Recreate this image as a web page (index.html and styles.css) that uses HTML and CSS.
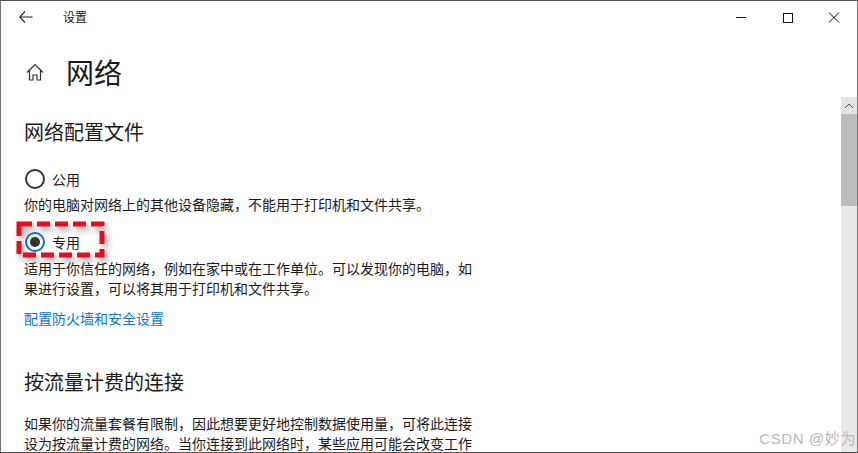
FILE: index.html
```html
<!DOCTYPE html>
<html lang="zh-CN">
<head>
<meta charset="utf-8">
<title>设置</title>
<link rel="stylesheet" href="styles.css">
</head>
<body>
<div class="window">
  <header class="titlebar">
    <div class="title-left">
      <svg class="back" width="14" height="12" viewBox="0 0 14 12"><path d="M6 .5.8 6 6 11.500M.8 6H13.500" fill="none" stroke="#222" stroke-width="1.100"/></svg>
      <span class="app-title">设置</span>
    </div>
    <div class="controls">
      <svg class="ctl" width="46" height="34" viewBox="0 0 46 34"><path d="M17 16.500h10" stroke="#111" stroke-width="1"/></svg>
      <svg class="ctl" width="46" height="34" viewBox="0 0 46 34"><rect x="18.500" y="12.500" width="9" height="9" fill="none" stroke="#111" stroke-width="1"/></svg>
      <svg class="ctl" width="46" height="34" viewBox="0 0 46 34"><path d="M18 11.500l10 10M28 11.500l-10 10" stroke="#111" stroke-width="1"/></svg>
    </div>
  </header>
  <div class="body">
    <main class="content">
      <div class="page-head">
        <svg class="home" width="18" height="18" viewBox="0 0 18 18"><path d="M1 9.500 9 1.500l8 8M3.500 7.500V17H7v-5h4v5h3.500V7.500" fill="none" stroke="#333" stroke-width="1.200"/></svg>
        <h1>网络</h1>
      </div>
      <h2 class="first">网络配置文件</h2>
      <label class="radio radio-public"><span class="dot"></span><span>公用</span></label>
      <p class="desc nowrap">你的电脑对网络上的其他设备隐藏，不能用于打印机和文件共享。</p>
      <div class="radio-wrap">
        <label class="radio"><span class="dot on"></span><span>专用</span></label>
        <svg class="mark" width="90" height="38" viewBox="0 0 90 38"><rect x="3" y="3" width="83" height="31" fill="none" stroke="#ee0a1e" stroke-width="5" stroke-dasharray="13 5"/></svg>
      </div>
      <p class="desc wide">适用于你信任的网络，例如在家中或在工作单位。可以发现你的电脑，如果进行设置，可以将其用于打印机和文件共享。</p>
      <a class="link" href="#">配置防火墙和安全设置</a>
      <h2 class="second">按流量计费的连接</h2>
      <p class="desc metered">如果你的流量套餐有限制，因此想要更好地控制数据使用量，可将此连接设为按流量计费的网络。当你连接到此网络时，某些应用可能会改变工作</p>
    </main>
    <aside class="scrollbar">
      <div class="arrow"><svg width="10" height="6" viewBox="0 0 10 6"><path d="M1 5l4-4 4 4" fill="none" stroke="#555" stroke-width="1"/></svg></div>
      <div class="thumb"></div>
    </aside>
  </div>
  <span class="watermark">CSDN @妙为</span>
</div>
</body>
</html>
```
FILE: styles.css
```css
* { box-sizing: border-box; }
html, body { margin: 0; height: 100%; }
body { background: #fff; overflow: hidden; font-family: "Noto Sans CJK SC", "Noto Sans", sans-serif; color: #1a1a1a; }
.window { position: relative; width: 858px; height: 453px; border-top: 1px solid #555; border-left: 1px solid #777; border-right: 1px solid #777; border-bottom: 1px solid #555; overflow: hidden; display: flex; flex-direction: column; }
.titlebar { height: 34px; display: flex; justify-content: space-between; flex: none; }
.title-left { display: flex; align-items: center; padding-left: 18px; padding-bottom: 3px; }
.back { display: block; }
.app-title { font-size: 12px; margin-left: 30px; line-height: 34px; }
.controls { display: flex; }
.ctl { display: block; }
.body { flex: 1; display: flex; min-height: 0; }
.content { flex: 1; padding: 0 0 0 23px; min-width: 0; overflow: hidden; }
.page-head { display: flex; align-items: center; height: 46px; margin-top: 14px; padding-left: 2px; }
.home { display: block; }
h1 { font-size: 28px; font-weight: 400; margin: 0 0 0 22px; line-height: 46px; }
h2 { font-size: 20px; font-weight: 400; margin: 0; line-height: 28px; }
h2.first { margin-top: 23px; }
h2.second { margin-top: 40px; }
.radio { display: flex; align-items: center; gap: 7px; font-size: 14px; height: 22px; padding-left: 1px; }
.radio-public { margin-top: 22px; }
.dot { width: 20px; height: 20px; border: 2px solid #333; border-radius: 50%; flex: none; position: relative; }
.dot.on { border-color: #0f6fc6; }
.dot.on::after { content: ""; position: absolute; left: 3px; top: 3px; width: 10px; height: 10px; border-radius: 50%; background: #333; }
.desc { font-size: 14px; line-height: 20px; margin: 0; width: 450px; }
.nowrap { margin-top: 4px; width: 500px; }
.radio-wrap { position: relative; margin-top: 17px; }
.mark { position: absolute; left: -8px; top: -10px; filter: drop-shadow(3px 4px 3px rgba(0,0,0,.35)); }
.wide { margin-top: 5px; }
.link { display: block; font-size: 14px; line-height: 20px; color: #0a78d4; text-decoration: none; margin-top: 10px; }
.metered { margin-top: 17px; }
.scrollbar { width: 16px; flex: none; background: #e9e9e9; margin-top: 62px; display: flex; flex-direction: column; }
.arrow { height: 17px; display: flex; align-items: center; justify-content: center; background: #e4e4e4; }
.thumb { height: 92px; background: #bcbcbc; }
.watermark { position: absolute; right: 1px; bottom: 4px; font-size: 15px; color: #b9b9b9; font-family: "Liberation Sans", "Noto Sans CJK SC", sans-serif; letter-spacing: .6px; }
```
